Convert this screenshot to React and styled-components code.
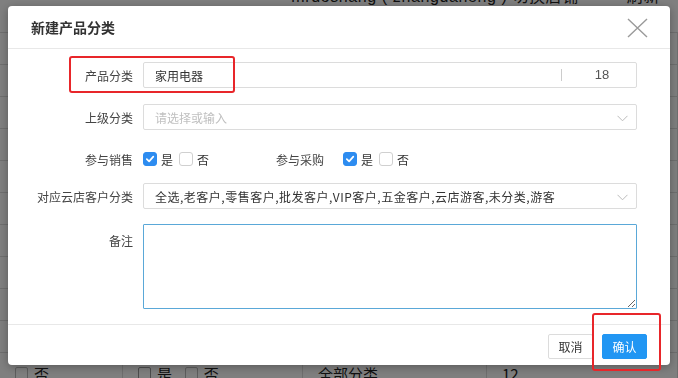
import React from 'react'
import styled, { createGlobalStyle } from 'styled-components'

const GlobalStyle = createGlobalStyle`
  * { box-sizing: border-box; }
  html, body { margin: 0; padding: 0; }
  body {
    width: 678px;
    height: 378px;
    overflow: hidden;
    font-family: "Noto Sans CJK SC", "Noto Sans", sans-serif;
    background: #fff;
    color: #333;
  }
`

// only the last table row peeks out below the dialog
const rows = Array.from({ length: 11 })

function App() {
  return (
    <>
      <GlobalStyle />
      <Page>
        <TopBar>
          <TopText>mrdoshang ( zhangdaheng ) 切换店铺</TopText>
          <TopText>刷新</TopText>
        </TopBar>
        <Table>
          {rows.map((r, k) => (
            <TableRow key={k}>
              {k === rows.length - 1 ? (
                <>
                  <Cell $w={123}><SmallBox /> 否</Cell>
                  <Cell $w={180}><SmallBox $checked /> 是 &nbsp; <SmallBox /> 否</Cell>
                  <Cell $w={184}>全部分类</Cell>
                  <Cell $w={191}>12</Cell>
                </>
              ) : (
                <>
                  <Cell $w={123} />
                  <Cell $w={180} />
                  <Cell $w={184} />
                  <Cell $w={191} />
                </>
              )}
            </TableRow>
          ))}
        </Table>
      </Page>
      <Overlay />
      <Modal>
        <Header>
          <Title>新建产品分类</Title>
          <CloseButton>
            <svg width="21" height="20" viewBox="0 0 21 20">
              <path d="M1 1 L20 19 M20 1 L1 19" stroke="#9a9a9a" strokeWidth="1.4" fill="none" />
            </svg>
          </CloseButton>
        </Header>
        <Body>
          <Row $mb={16}>
            <Label>产品分类</Label>
            <Field>
              <FieldText>家用电器</FieldText>
              <Counter>18</Counter>
            </Field>
          </Row>
          <Row $mb={14}>
            <Label>上级分类</Label>
            <Field>
              <FieldText $placeholder>请选择或输入</FieldText>
              <Chevron />
            </Field>
          </Row>
          <Row $mb={9} $h={30}>
            <Label>参与销售</Label>
            <Option><CheckBox $checked><Tick /></CheckBox>是</Option>
            <Option><CheckBox />否</Option>
            <Label $auto $ml={61}>参与采购</Label>
            <Option><CheckBox $checked><Tick /></CheckBox>是</Option>
            <Option><CheckBox />否</Option>
          </Row>
          <Row $mb={15}>
            <Label>对应云店客户分类</Label>
            <Field>
              <FieldText $spread>全选,老客户,零售客户,批发客户,VIP客户,五金客户,云店游客,未分类,游客</FieldText>
              <Chevron />
            </Field>
          </Row>
          <Row $top>
            <Label $pt={8}>备注</Label>
            <Notes />
          </Row>
        </Body>
        <Footer>
          <Button>取消</Button>
          <Button $primary>确认</Button>
        </Footer>
        <Annotation $l={61} $t={50} $w={166} $h={37} />
        <Annotation $l={584} $t={307} $w={69} $h={58} />
      </Modal>
    </>
  )
}

function Tick() {
  return (
    <svg width="10" height="10" viewBox="0 0 10 10">
      <path d="M1.8 5.2 L4.1 7.4 L8.3 2.6" stroke="#fff" strokeWidth="1.7" fill="none" strokeLinecap="round" strokeLinejoin="round" />
    </svg>
  )
}

function Chevron() {
  return (
    <ChevronBox>
      <svg width="11" height="7" viewBox="0 0 11 7">
        <path d="M0.5 0.8 L5.5 5.8 L10.5 0.8" stroke="#bbb" strokeWidth="1" fill="none" />
      </svg>
    </ChevronBox>
  )
}

export default App

const Page = styled.div`
  width: 678px;
  height: 378px;
  display: flex;
  flex-direction: column;
`

const TopBar = styled.div`
  height: 33px;
  display: flex;
  justify-content: flex-end;
  align-items: flex-end;
  gap: 48px;
  padding: 0 18px 27px 0;
  border-bottom: 1px solid #ddd;
`

const TopText = styled.span`
  font-family: "Liberation Sans", "Noto Sans CJK SC", sans-serif;
  font-size: 16px;
  line-height: 16px;
  letter-spacing: 0.6px;
  color: #222;
`

const Table = styled.div`
  display: flex;
  flex-direction: column;
`

const TableRow = styled.div`
  height: 32px;
  display: flex;
  border-bottom: 1px solid #ddd;
`

const Cell = styled.div`
  width: ${p => p.$w}px;
  display: flex;
  align-items: center;
  gap: 6px;
  padding: 10px 0 0 15px;
  font-size: 15px;
  color: #222;
  border-right: 1px solid #ddd;
`

const SmallBox = styled.span`
  width: 13px;
  height: 13px;
  border: 1px solid ${p => (p.$checked ? '#999' : '#bbb')};
  border-radius: 2px;
`

const Overlay = styled.div`
  position: fixed;
  inset: 0;
  background: rgba(0, 0, 0, 0.5);
`

const Modal = styled.div`
  position: fixed;
  left: 8px;
  top: 6px;
  width: 662px;
  height: 359px;
  background: #fff;
  border-radius: 4px;
  box-shadow: 0 2px 10px rgba(0, 0, 0, 0.3);
  display: flex;
  flex-direction: column;
`

const Header = styled.div`
  height: 43px;
  flex-shrink: 0;
  display: flex;
  align-items: center;
  justify-content: space-between;
  padding: 0 22px 0 23px;
  border-bottom: 1px solid #e8e8e8;
`

const Title = styled.h2`
  margin: 0;
  font-size: 14px;
  font-weight: bold;
  color: #333;
`

const CloseButton = styled.div`
  display: flex;
  padding-top: 2px;
`

const Body = styled.div`
  padding: 13px 33px 15px 10px;
  display: flex;
  flex-direction: column;
  border-bottom: 1px solid #e8e8e8;
`

const Row = styled.div`
  display: flex;
  align-items: ${p => (p.$top ? 'flex-start' : 'center')};
  height: ${p => (p.$h ? `${p.$h}px` : 'auto')};
  margin-bottom: ${p => p.$mb || 0}px;
`

const Label = styled.label`
  width: ${p => (p.$auto ? 'auto' : '115px')};
  flex-shrink: 0;
  text-align: right;
  margin-left: ${p => p.$ml || 0}px;
  margin-right: ${p => (p.$auto ? 19 : 10)}px;
  padding-top: ${p => p.$pt || 0}px;
  font-size: 12px;
  color: #444;
  white-space: nowrap;
`

const Field = styled.div`
  flex: 1;
  height: 26px;
  display: flex;
  align-items: center;
  border: 1px solid #dcdcdc;
  border-radius: 2px;
  background: #fff;
`

const FieldText = styled.span`
  flex: 1;
  padding-left: 11px;
  font-size: 12px;
  letter-spacing: ${p => (p.$spread ? '0.5px' : '0')};
  color: ${p => (p.$placeholder ? '#c0c0c0' : '#333')};
  white-space: nowrap;
  overflow: hidden;
`

const Counter = styled.span`
  width: 75px;
  height: 12px;
  line-height: 12px;
  display: flex;
  justify-content: center;
  padding-left: 6px;
  border-left: 1px solid #ccc;
  font-family: "Liberation Sans", sans-serif;
  font-size: 13px;
  color: #555;
`

const ChevronBox = styled.span`
  display: flex;
  padding: 2px 8px 0 8px;
`

const Option = styled.span`
  display: flex;
  align-items: center;
  gap: 4px;
  margin-right: 6px;
  font-size: 12px;
  color: #333;
`

const CheckBox = styled.span`
  width: 14px;
  height: 14px;
  display: flex;
  align-items: center;
  justify-content: center;
  border-radius: 3px;
  border: 1px solid ${p => (p.$checked ? '#2d8cf0' : '#d0d0d0')};
  background: ${p => (p.$checked ? '#2d8cf0' : '#fff')};
`

const Notes = styled.textarea`
  flex: 1;
  height: 85px;
  margin: 0;
  border: 1px solid #5aa8d8;
  border-radius: 1px;
  outline: none;
  resize: both;
  font-family: inherit;
`

const Footer = styled.div`
  flex: 1;
  display: flex;
  justify-content: flex-end;
  align-items: flex-start;
  gap: 9px;
  padding: 9px 23px 0 0;
`

const Button = styled.button`
  width: 45px;
  height: 25px;
  padding: 0;
  border-radius: 2px;
  border: 1px solid ${p => (p.$primary ? '#2196f3' : '#dcdcdc')};
  background: ${p => (p.$primary ? '#2196f3' : '#fff')};
  color: ${p => (p.$primary ? '#fff' : '#333')};
  font-family: "Noto Sans CJK SC", sans-serif;
  font-size: 12px;
`

const Annotation = styled.div`
  position: absolute;
  left: ${p => p.$l}px;
  top: ${p => p.$t}px;
  width: ${p => p.$w}px;
  height: ${p => p.$h}px;
  border: 2px solid #e8262a;
  border-radius: 3px;
  pointer-events: none;
`
